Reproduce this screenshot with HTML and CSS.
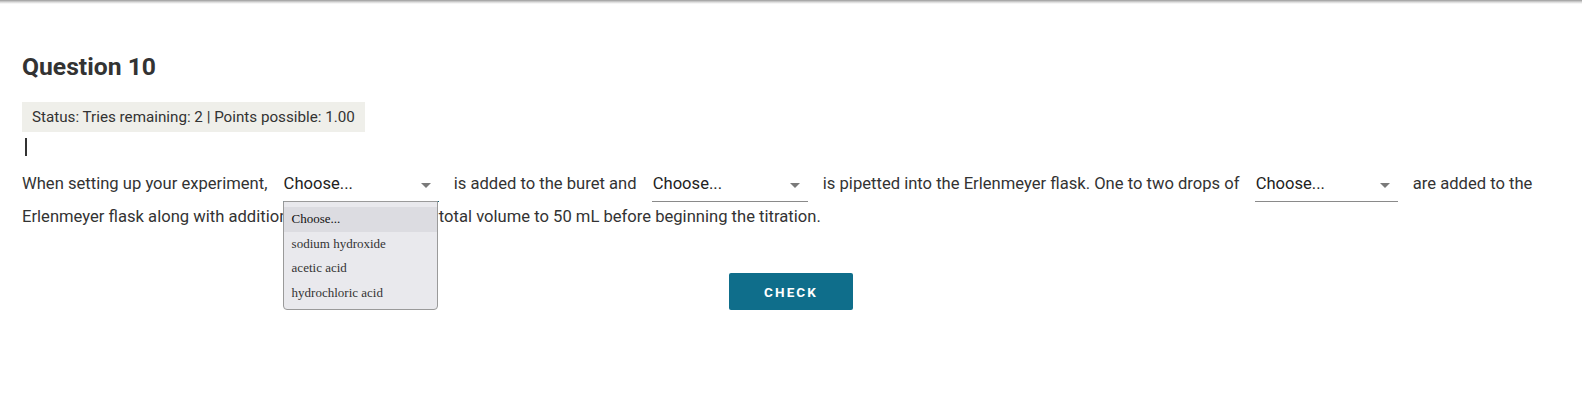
FILE: index.html
```html
<!DOCTYPE html>
<html>

<head>
    <meta charset="utf-8">
    <title>Question 10</title>
    <link rel="stylesheet" href="styles.css">
</head>

<body>
    <div class="topbar"></div>

    <div class="problem">
        <h3 class="title">Question 10</h3>
        <div class="status">Status: Tries remaining: 2 | Points possible: 1.00</div>
        <div class="caret"></div>

        <div class="text">
            When setting up your experiment,
            <span class="select focused w1">Choose...<i class="arrow"></i>
                <span class="options">
                    <span class="opt active">Choose...</span>
                    <span class="opt">sodium hydroxide</span>
                    <span class="opt">acetic acid</span>
                    <span class="opt">hydrochloric acid</span>
                </span>
            </span>
            is added to the buret and
            <span class="select w2">Choose...<i class="arrow"></i></span>
            is pipetted into the Erlenmeyer flask. One to two drops of
            <span class="select w3">Choose...<i class="arrow"></i></span>
            are added to the Erlenmeyer flask along with additional water to bring the total volume to 50 mL before beginning the titration.
        </div>

        <div class="actions">
            <button class="btn">CHECK</button>
        </div>
    </div>
</body>

</html>
```

FILE: styles.css
```css
body,
h3 {
    padding: 0;
    margin: 0;
}

body {
    background: #ffffff;
    font-family: Roboto, "Liberation Sans", sans-serif;
    color: #333333;
}

.topbar {
    height: 4px;
    background: linear-gradient(#9a9a9a, #d6d6d6 50%, #ffffff);
}

.problem {
    padding: 0 22px;
}

.title {
    margin-top: 48px;
    font-size: 24.7px;
    line-height: 30px;
    font-weight: 700;
    color: #333333;
}

.status {
    display: inline-block;
    margin-top: 20px;
    padding: 0 10px;
    height: 30px;
    line-height: 30px;
    font-size: 15.2px;
    background: #efefea;
    color: #333333;
}

.caret {
    width: 2px;
    height: 18px;
    margin: 6px 0 0 3px;
    background: #333333;
}

.text {
    margin-top: 13px;
    font-size: 16.6px;
    line-height: 30px;
    color: #333333;
}

.select {
    position: relative;
    display: inline-block;
    margin: 0 11px;
    padding: 0 0 6px 1px;
    line-height: 22px;
    border-bottom: 1px solid #8a8a8a;
    color: #222222;
    box-sizing: border-box;
}

.select.focused {
    border-bottom-color: #0f5f73;
}

.w1 {
    width: 156px;
}

.w2 {
    width: 156px;
}

.w3 {
    width: 143px;
}

.arrow {
    position: absolute;
    right: 8px;
    top: 10px;
    width: 0;
    height: 0;
    border-left: 5px solid transparent;
    border-right: 5px solid transparent;
    border-top: 5px solid #7a7a7a;
}

.options {
    position: absolute;
    left: 0;
    top: 100%;
    width: 155px;
    padding: 5px 0 3px;
    background: #e9e9ed;
    border: 1px solid #9a9a9a;
    border-radius: 0 0 4px 4px;
    box-sizing: border-box;
    font-family: "Liberation Serif", serif;
    font-size: 13px;
    line-height: 24.7px;
    color: #333333;
    z-index: 5;
}

.opt {
    display: block;
    padding-left: 8px;
}

.opt.active {
    background: #dcdce1;
    color: #111111;
}

.actions {
    margin-top: 41px;
    text-align: center;
}

.btn {
    width: 124px;
    height: 37px;
    background: #0f6e8b;
    border: none;
    border-radius: 2px;
    color: #ffffff;
    font-family: Roboto, "Liberation Sans", sans-serif;
    font-size: 13.5px;
    font-weight: 700;
    letter-spacing: 2.1px;
}

.btn:focus {
    outline: none;
}
```
